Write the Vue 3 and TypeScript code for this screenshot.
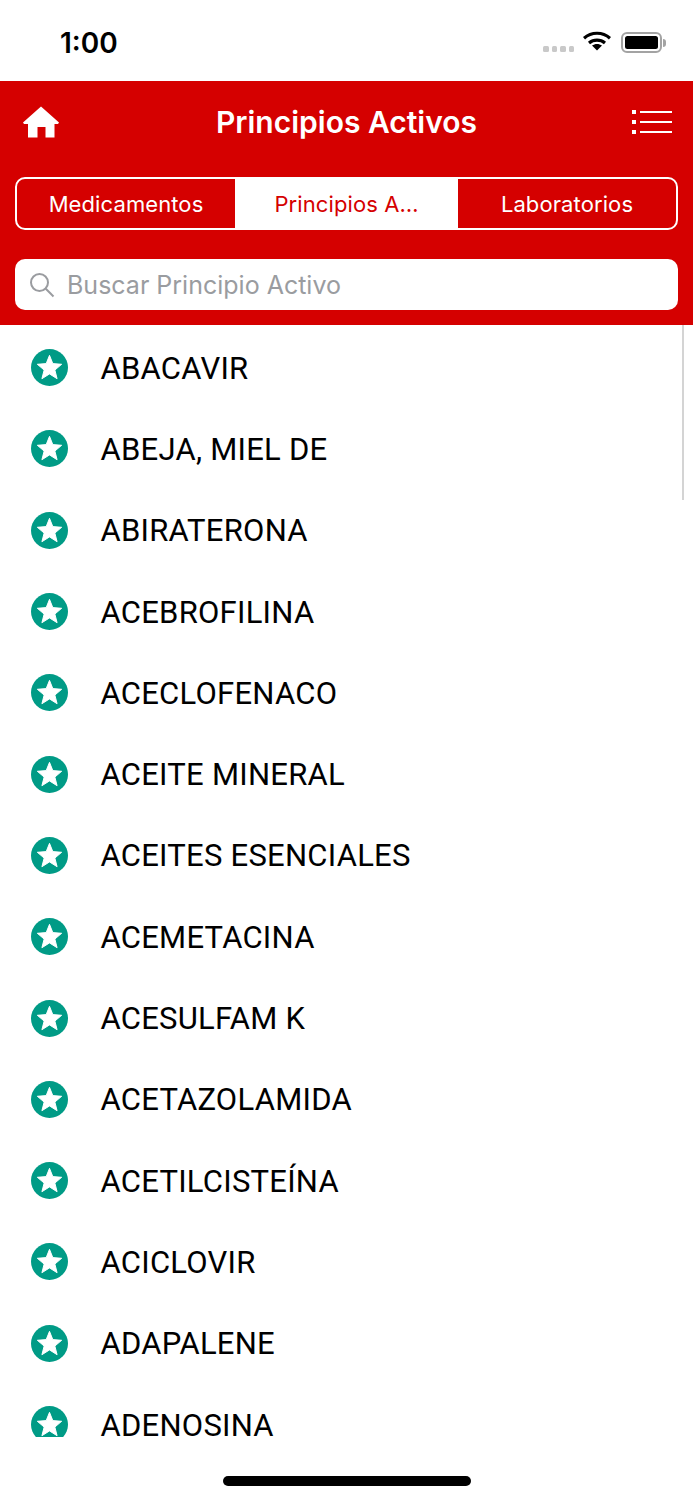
<script setup lang="ts">
const tabs = [
  { label: 'Medicamentos', active: false },
  { label: 'Principios A…', active: true },
  { label: 'Laboratorios', active: false },
]

const items = [
  'ABACAVIR',
  'ABEJA, MIEL DE',
  'ABIRATERONA',
  'ACEBROFILINA',
  'ACECLOFENACO',
  'ACEITE MINERAL',
  'ACEITES ESENCIALES',
  'ACEMETACINA',
  'ACESULFAM K',
  'ACETAZOLAMIDA',
  'ACETILCISTEÍNA',
  'ACICLOVIR',
  'ADAPALENE',
  'ADENOSINA',
]
</script>

<template>
  <div class="screen">
    <div class="status">
      <span class="time">1:00</span>
      <div class="status-right">
        <div class="signal"><i></i><i></i><i></i><i></i></div>
        <svg class="wifi" width="28" height="20" viewBox="0 0 28 20">
          <path d="M1 7.2C8.4.6 19.6.6 27 7.2" fill="none" stroke="#000" stroke-width="3.2" />
          <path d="M6 12C10.6 8.2 17.4 8.2 22 12" fill="none" stroke="#000" stroke-width="3.2" />
          <path d="M9 14.6C12 12.5 16 12.5 19 14.6L14 19.5Z" fill="#000" />
        </svg>
        <div class="battery"><div class="battery-fill"></div></div>
        <div class="battery-cap"></div>
      </div>
    </div>

    <div class="red">
      <div class="nav">
        <svg class="home" width="36" height="32" viewBox="0 0 36 32">
          <path fill="#fff" d="M18 0.5 L36 16.5 L35 18 L31.5 18 L31.5 31.5 L22.5 31.5 L22.5 21 L14.5 21 L14.5 31.5 L5 31.5 L5 18 L1 18 L0 16.5 Z" />
        </svg>
        <h1 class="title">Principios Activos</h1>
        <svg class="menu" width="40" height="26" viewBox="0 0 40 26">
          <g fill="#fff">
            <rect x="0" y="1" width="4" height="4" />
            <rect x="0" y="11" width="4" height="4" />
            <rect x="0" y="21" width="4" height="4" />
            <rect x="8" y="2" width="32" height="2" />
            <rect x="8" y="12" width="32" height="2" />
            <rect x="8" y="22" width="32" height="2" />
          </g>
        </svg>
      </div>

      <div class="tabs">
        <div v-for="t in tabs" :key="t.label" class="tab" :class="{ active: t.active }">
          {{ t.label }}
        </div>
      </div>

      <div class="search">
        <svg width="26" height="26" viewBox="0 0 26 26" fill="none" stroke="#9a9ca0" stroke-width="2">
          <circle cx="10.5" cy="10.5" r="8.5" />
          <path d="M16.8 16.8L24.5 24.5" />
        </svg>
        <span class="placeholder">Buscar Principio Activo</span>
      </div>
    </div>

    <div class="list">
      <div class="scrollbar"></div>
      <div v-for="name in items" :key="name" class="row">
        <svg class="star" width="37" height="37" viewBox="0 0 38 38">
          <circle cx="19" cy="19" r="19" fill="#009b86" />
          <path fill="#fff" stroke="#fff" stroke-width="1" stroke-linejoin="round" d="M19 6.5L22.4 15L31.5 15.7L24.5 21.6L26.8 30.5L19 25.6L11.2 30.5L13.5 21.6L6.5 15.7L15.6 15Z" />
        </svg>
        <span class="name">{{ name }}</span>
      </div>
    </div>

    <div class="home-bar"></div>
  </div>
</template>

<style>
html,
body {
  margin: 0;
  background: #fff;
}
</style>

<style scoped>
.screen {
  width: 693px;
  height: 1500px;
  display: flex;
  flex-direction: column;
  position: relative;
  overflow: hidden;
  background: #fff;
  font-family: Inter, "Liberation Sans", sans-serif;
}

.status {
  height: 81px;
  flex: none;
  display: flex;
  align-items: center;
  justify-content: space-between;
  padding: 4px 27px 0 60px;
  box-sizing: border-box;
}

.time {
  font-size: 28px;
  font-weight: 600;
  color: #000;
}

.status-right {
  display: flex;
  align-items: center;
}

.signal {
  display: flex;
  gap: 3px;
  margin-top: 13px;
  margin-right: 9px;
}

.signal i {
  width: 5.5px;
  height: 6px;
  border-radius: 1.5px;
  background: #c9c9c9;
}

.wifi {
  margin-right: 10px;
  margin-top: -3px;
}

.battery {
  width: 41px;
  height: 21px;
  border: 2px solid #a3a3a3;
  border-radius: 6px;
  box-sizing: border-box;
  padding: 2px;
}

.battery-fill {
  height: 100%;
  background: #000;
  border-radius: 2.5px;
}

.battery-cap {
  width: 3px;
  height: 8px;
  margin-left: 1px;
  background: #a3a3a3;
  border-radius: 0 3px 3px 0;
}

.red {
  height: 244px;
  flex: none;
  background: #d50000;
  padding: 0 15px;
  box-sizing: border-box;
  display: flex;
  flex-direction: column;
}

.nav {
  height: 82px;
  display: flex;
  align-items: center;
  justify-content: space-between;
  padding: 0 6px 0 8px;
  position: relative;
  flex: none;
}

.title {
  position: absolute;
  left: 0;
  right: 0;
  margin: 0;
  text-align: center;
  font-size: 30px;
  font-weight: 600;
  color: #fff;
}

.tabs {
  height: 53px;
  flex: none;
  margin-top: 14px;
  display: grid;
  grid-template-columns: 218px 223px 1fr;
  border: 2px solid #fff;
  border-radius: 10px;
  box-sizing: border-box;
  overflow: hidden;
}

.tab {
  display: flex;
  align-items: center;
  justify-content: center;
  white-space: nowrap;
  color: #fff;
  font-size: 22px;
  letter-spacing: 0.1px;
}

.tab.active {
  background: #fff;
  color: #d50000;
}

.search {
  height: 51px;
  flex: none;
  margin-top: 29px;
  background: #fff;
  border-radius: 10px;
  display: flex;
  align-items: center;
  padding-left: 14px;
  gap: 12px;
}

.placeholder {
  font-size: 25px;
  color: #9a9ca0;
}

.list {
  position: relative;
  height: 1112px;
  flex: none;
  overflow: hidden;
  padding-top: 2px;
  box-sizing: border-box;
}

.scrollbar {
  position: absolute;
  top: 0;
  right: 9px;
  width: 2px;
  height: 175px;
  background: #d4d4d4;
}

.row {
  height: 81.3px;
  display: flex;
  align-items: center;
  padding-left: 31px;
  gap: 32.5px;
}

.name {
  font-family: Roboto, "Liberation Sans", sans-serif;
  font-size: 31px;
  line-height: 26px;
  letter-spacing: 0.25px;
  color: #000;
  margin-top: 2px;
}

.home-bar {
  position: absolute;
  left: 223px;
  bottom: 14px;
  width: 248px;
  height: 10px;
  border-radius: 5px;
  background: #000;
}
</style>
